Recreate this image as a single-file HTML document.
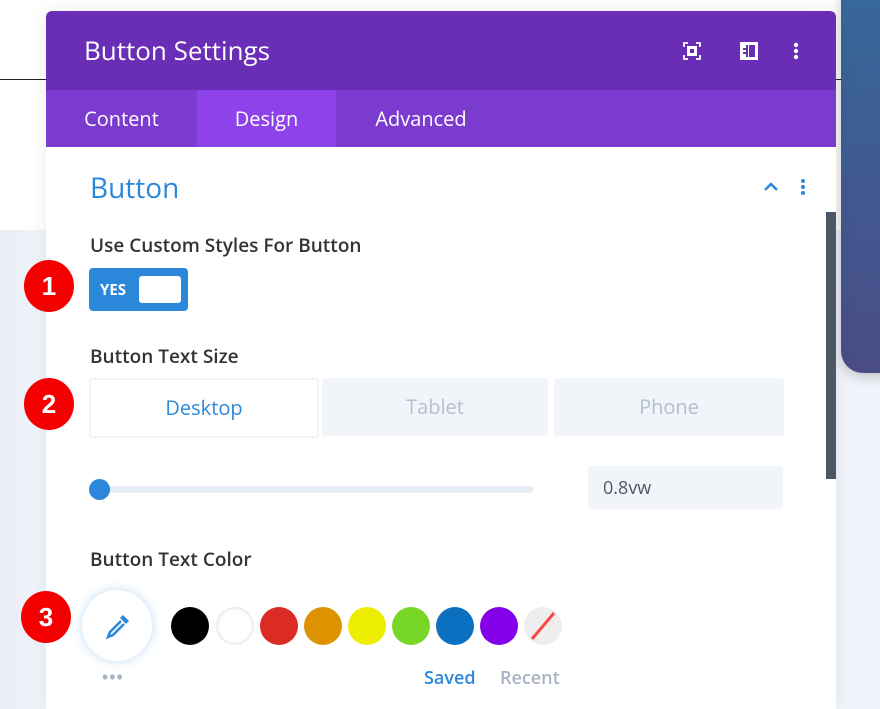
<!DOCTYPE html>
<html><head><meta charset="utf-8"><style>
*{margin:0;padding:0;box-sizing:border-box}
html,body{width:880px;height:709px;overflow:hidden}
body{position:relative;font-family:"Open Sans","Liberation Sans",sans-serif;background:#eef2f8}
.bgtop{position:absolute;left:0;top:0;width:880px;height:230px;background:#fff}
.line{position:absolute;left:0;top:79px;width:880px;height:1px;background:#222}
.bgbot{position:absolute;left:0;top:230px;width:880px;height:479px;background:linear-gradient(90deg,#e8edf3 0,#f1f5fb 46px)}
.card{position:absolute;left:841px;top:-10px;width:60px;height:383px;border-radius:0 0 0 22px;background:linear-gradient(180deg,#37689a,#4a4c86);box-shadow:0 4px 12px rgba(0,0,0,.2)}
.panel{position:absolute;left:46px;top:11px;width:790px;height:698px;background:#fff;border-radius:6px 6px 0 0;overflow:hidden;box-shadow:0 0 20px rgba(0,0,0,.08)}
.hdr{height:79px;background:#6a2db5;color:#fff;font-size:26px;padding:21px 0 0 38px}
.tabs{height:57px;background:#7b3bcf;display:flex;color:#fff;font-size:20px}
.tabs div{line-height:57px;text-align:center}
.tabs .act{background:#8d42ea}
.abs{position:absolute}
.lbl{position:absolute;left:90px;font-size:19px;color:#333;font-weight:600}
.badge{position:absolute;width:50px;height:52px;border-radius:50%;background:#f50000;color:#fff;font:bold 26px "Liberation Sans",sans-serif;text-align:center;line-height:52px}
.sw{position:absolute;top:607px;width:38px;height:38px;border-radius:50%}
</style></head><body>
<div class="bgtop"></div><div class="line"></div><div class="bgbot"></div>
<div class="card"></div>
<div class="panel">
<div class="hdr">Button Settings</div>
<div class="tabs"><div style="width:151px">Content</div><div class="act" style="width:139px">Design</div><div style="width:170px">Advanced</div></div>
</div>
<svg class="abs" style="left:683px;top:42px" width="18" height="18" viewBox="0 0 18 18" fill="none" stroke="#fff" stroke-width="1.8"><path d="M1 5V1h4M13 1h4v4M17 13v4h-4M5 17H1v-4"/><rect x="5.5" y="5.5" width="7" height="7" stroke-width="3"/></svg>
<svg class="abs" style="left:740px;top:42px" width="18" height="18" viewBox="0 0 18 18"><rect x="0" y="0" width="18" height="18" fill="#fff"/><rect x="6" y="3" width="2" height="12" fill="#6a2db5"/><rect x="9" y="3" width="6" height="12" fill="#6a2db5"/><rect x="3" y="6" width="3" height="2" fill="#6a2db5"/><rect x="3" y="10" width="3" height="2" fill="#6a2db5"/></svg>
<svg class="abs" style="left:793px;top:42px" width="6" height="18"><circle cx="3" cy="3" r="2.2" fill="#fff"/><circle cx="3" cy="9" r="2.2" fill="#fff"/><circle cx="3" cy="15" r="2.2" fill="#fff"/></svg>
<div class="abs" style="left:90px;top:169px;font-size:28px;color:#2b87da">Button</div>
<svg class="abs" style="left:763px;top:181px" width="16" height="12"><path d="M2 9l6-6 6 6" stroke="#2b87da" stroke-width="2.5" fill="none"/></svg>
<svg class="abs" style="left:800px;top:178px" width="6" height="18"><circle cx="3" cy="3" r="2" fill="#2b87da"/><circle cx="3" cy="9" r="2" fill="#2b87da"/><circle cx="3" cy="15" r="2" fill="#2b87da"/></svg>
<div class="abs" style="left:826px;top:212px;width:10px;height:267px;background:#4c5866"></div>
<div class="lbl" style="top:232px">Use Custom Styles For Button</div>
<div class="badge" style="left:24px;top:260px">1</div>
<div class="abs" style="left:89px;top:268px;width:99px;height:43px;background:#2b87da;border-radius:4px"><span style="position:absolute;left:11px;top:12px;color:#fff;font-size:15px;font-weight:bold">YES</span><div style="position:absolute;left:50px;top:8px;width:42px;height:27px;background:#fff;border-radius:3px"></div></div>
<div class="lbl" style="top:343px">Button Text Size</div>
<div class="badge" style="left:24px;top:378px">2</div>
<div class="abs" style="left:89px;top:378px;width:230px;height:60px;background:#f1f4f9;border-radius:3px"></div>
<div class="abs" style="left:91px;top:380px;width:226px;height:56px;background:#fff;color:#2b87da;font-size:20px;text-align:center;line-height:56px">Desktop</div>
<div class="abs" style="left:322px;top:378px;width:226px;height:58px;background:#f1f4f9;border-radius:3px;color:#b3bfce;font-size:20px;text-align:center;line-height:58px">Tablet</div>
<div class="abs" style="left:554px;top:378px;width:230px;height:58px;background:#f1f4f9;border-radius:3px;color:#b3bfce;font-size:20px;text-align:center;line-height:58px">Phone</div>
<div class="abs" style="left:90px;top:486px;width:443px;height:7px;background:#e5ecf5;border-radius:4px"></div>
<div class="abs" style="left:89px;top:479px;width:21px;height:21px;background:#2b87da;border-radius:50%"></div>
<div class="abs" style="left:588px;top:466px;width:195px;height:43px;background:#f1f4f9;border-radius:3px;color:#4c5866;font-size:18px;padding:10px 0 0 15px">0.8vw</div>
<div class="lbl" style="top:546px">Button Text Color</div>
<div class="badge" style="left:21px;top:591px">3</div>
<div class="abs" style="left:82px;top:590px;width:70px;height:71px;background:#fff;border-radius:50%;box-shadow:0 0 10px rgba(43,135,218,.3)"></div>
<svg class="abs" style="left:104px;top:612px" width="28" height="28" viewBox="0 0 28 28"><path d="M19 3l6 6-3 3-6-6z" fill="#2b87da"/><path d="M17 9L6 20l-2 5 5-2 11-11" stroke="#2b87da" stroke-width="2.5" fill="none"/></svg>
<div class="abs" style="left:101px;top:672px;color:#a8b4c4;font-size:22px;line-height:10px;letter-spacing:-1px">•••</div>
<div class="sw" style="left:171px;background:#000"></div>
<div class="sw" style="left:216px;background:#fff;box-shadow:inset 0 0 4px rgba(0,0,0,.2)"></div>
<div class="sw" style="left:260px;background:#dc2b24"></div>
<div class="sw" style="left:304px;background:#dd9200"></div>
<div class="sw" style="left:348px;background:#eced00"></div>
<div class="sw" style="left:392px;background:#77d626"></div>
<div class="sw" style="left:436px;background:#0c70c1"></div>
<div class="sw" style="left:480px;background:#8300e9"></div>
<div class="sw" style="left:524px;background:#eee;overflow:hidden"><svg width="38" height="38"><path d="M8 32L30 6" stroke="#f44" stroke-width="3"/></svg></div>
<div class="abs" style="left:424px;top:666px;color:#2b87da;font-size:18px;font-weight:600">Saved</div>
<div class="abs" style="left:500px;top:666px;color:#a8b4c4;font-size:18px;font-weight:600">Recent</div>
</body></html>
